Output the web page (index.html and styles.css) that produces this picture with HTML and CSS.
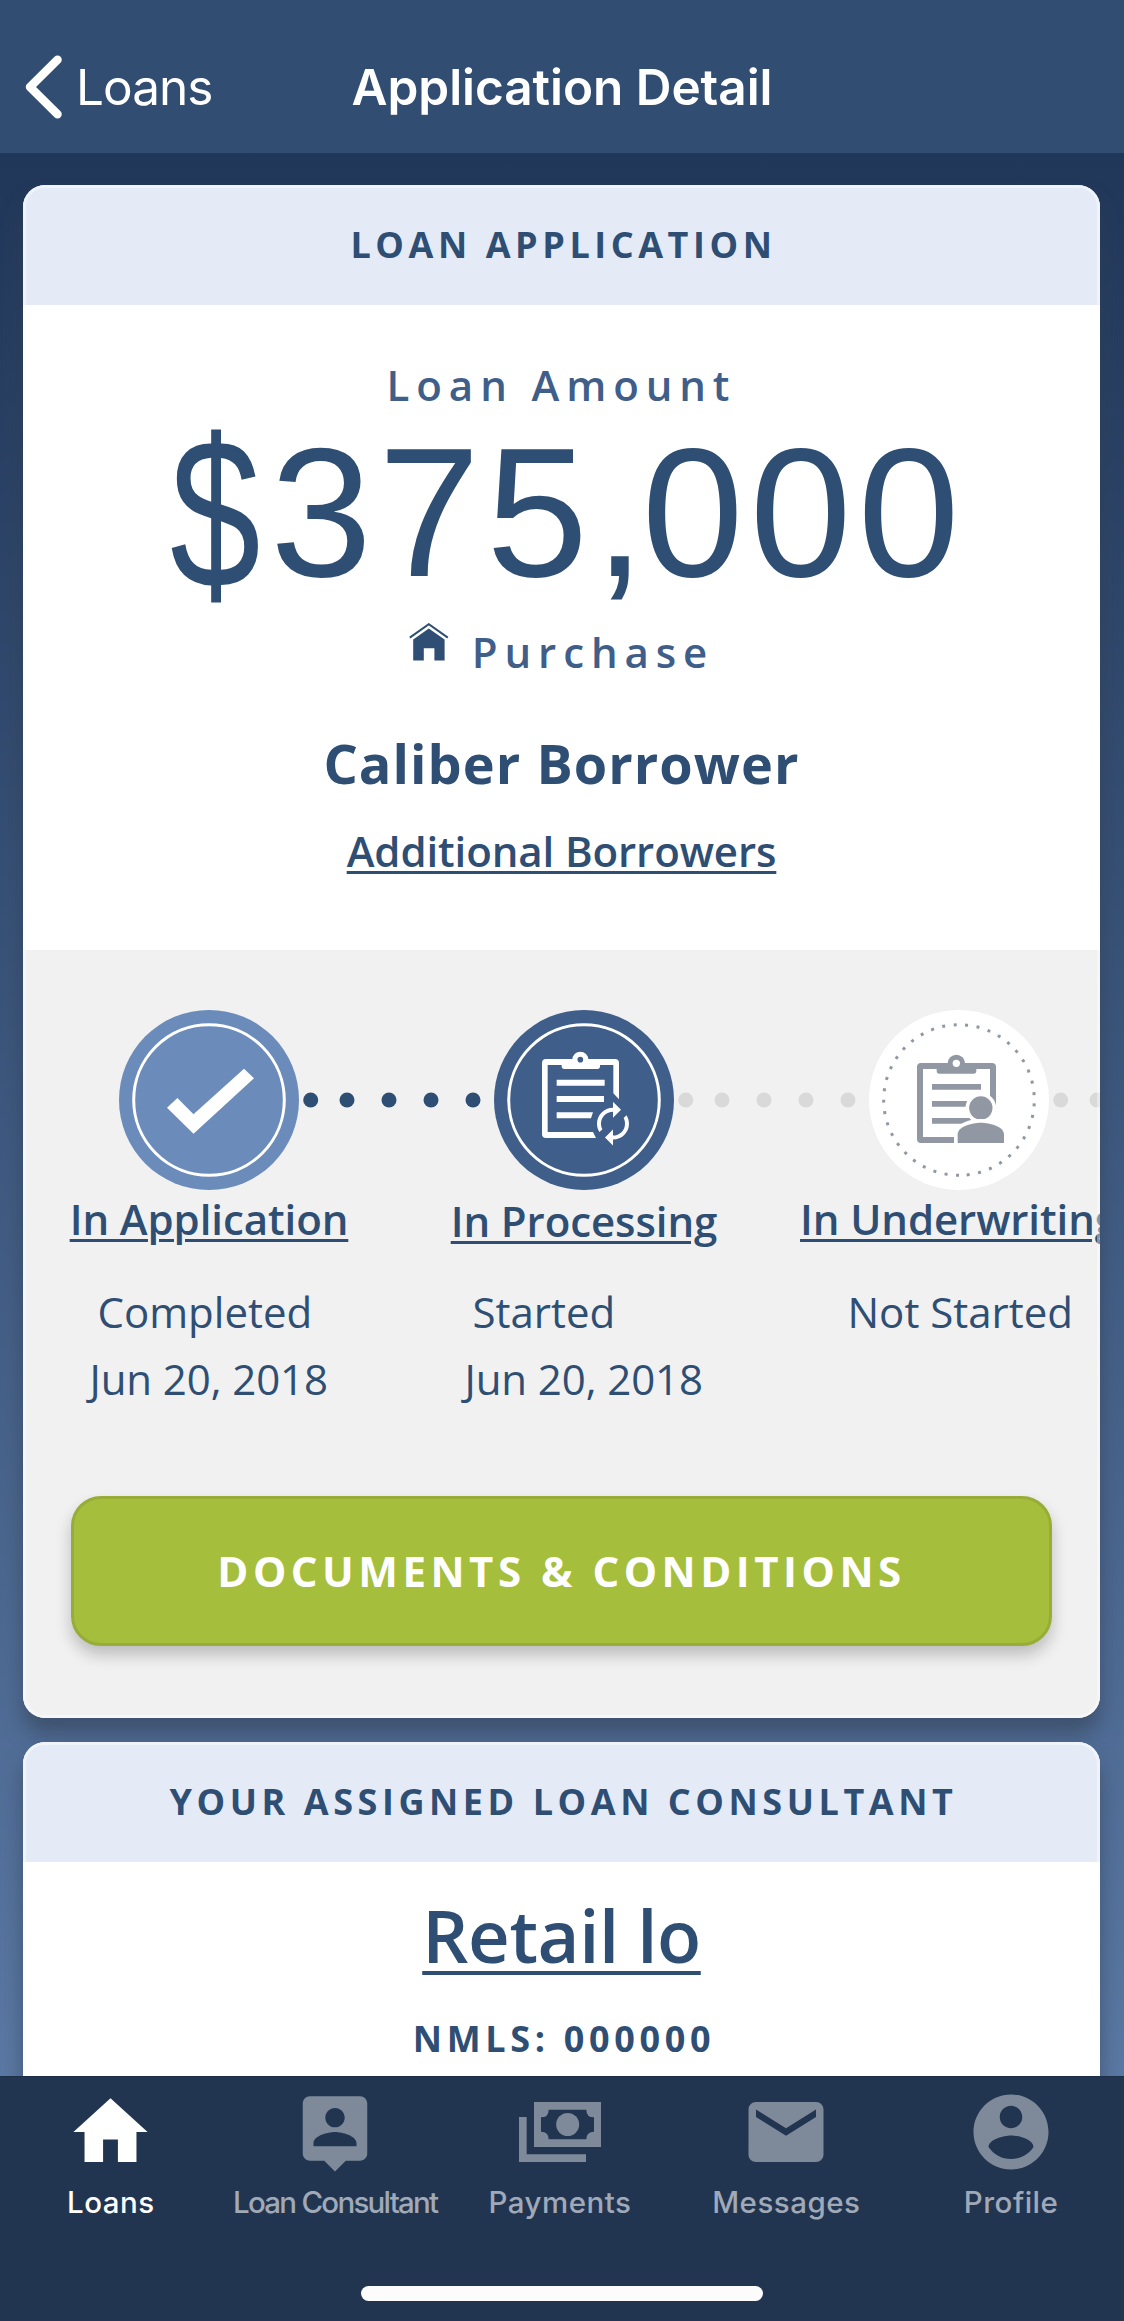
FILE: index.html
```
<!DOCTYPE html>
<html lang="en">
<head>
<meta charset="utf-8">
<title>Application Detail</title>
<link rel="stylesheet" href="styles.css">
</head>
<body>
<header class="navbar">
  <a class="back">
    <svg class="back-icon" width="42" height="70" viewBox="0 0 42 70"><path d="M36.500 7.800L9 35l27.500 27.200" fill="none" stroke="#fff" stroke-width="8.500" stroke-linecap="round" stroke-linejoin="round"/></svg>
    <span class="back-label">Loans</span>
  </a>
  <h1 class="title">Application Detail</h1>
</header>

<main class="content">
  <section class="card">
    <h2 class="card-head">LOAN APPLICATION</h2>
    <div class="summary">
      <p class="caption">Loan Amount</p>
      <p class="amount"><span class="currency">$</span>375<span class="comma">,</span>000</p>
      <div class="purpose">
        <svg class="house" width="40" height="38" viewBox="0 0 40 38" fill="#2f4e73"><path d="M.8 14.600L19.800 1.200l19 13.400" fill="none" stroke="#2f4e73" stroke-width="2"/><path d="M19.800 5.500L35.600 16.500v21H25.400V25.200H14.800v12.300H4.200v-21z"/></svg>
        <span class="caption">Purchase</span>
      </div>
      <p class="borrower">Caliber Borrower</p>
      <a class="link">Additional Borrowers</a>
    </div>

    <div class="progress">
      <div class="track">
        <svg class="stage" viewBox="0 0 180 180">
          <circle cx="90" cy="90" r="90" fill="#6b8cba"/>
          <circle cx="90" cy="90" r="75.300" fill="none" stroke="#fff" stroke-width="3"/>
          <path d="M48 97.700L58.400 88l16.100 16.300L125 58.700l10 9.600-60.500 55.400z" fill="#fff"/>
        </svg>
        <svg class="dots" viewBox="0 0 195 16" fill="#2f4e73"><circle cx="11.700" cy="8" r="7.500"/><circle cx="48" cy="8" r="7.500"/><circle cx="90" cy="8" r="7.500"/><circle cx="132" cy="8" r="7.500"/><circle cx="174" cy="8" r="7.500"/></svg>
        <svg class="stage" viewBox="0 0 180 180">
          <circle cx="90" cy="90" r="90" fill="#3f5e89"/>
          <circle cx="90" cy="90" r="75.300" fill="none" stroke="#fff" stroke-width="3"/>
          <g transform="translate(26 30) scale(.33333)" fill="#fff">
            <path d="M78 57H285q12 0 12 12V178L280 160V75H83V276H219L228 294H78q-12 0-12-12V69q0-12 12-12z"/>
            <path d="M125 66H240V79q0 8-8 8H133q-8 0-8-8z"/>
            <circle cx="181" cy="59" r="24"/><circle cx="181" cy="59" r="8.500" fill="#3f5e89"/>
            <path d="M110 119H254V137H110zM110 168H252V186H110zM110 217H219L213 235H110z"/>
            <path transform="translate(279 251) scale(-6 5.950) translate(-12 -12)" d="M12 4V1L8 5l4 4V6c3.310 0 6 2.690 6 6 0 1.010-.250 1.970-.700 2.800l1.460 1.460C19.540 15.030 20 13.570 20 12c0-4.420-3.580-8-8-8zm0 14c-3.310 0-6-2.690-6-6 0-1.010.250-1.970.700-2.800L5.240 7.740C4.460 8.970 4 10.430 4 12c0 4.420 3.580 8 8 8v3l4-4-4-4v3z"/>
          </g>
        </svg>
        <svg class="dots" viewBox="0 0 195 16" fill="#d9d9d9"><circle cx="11.700" cy="8" r="7.500"/><circle cx="48" cy="8" r="7.500"/><circle cx="90" cy="8" r="7.500"/><circle cx="132" cy="8" r="7.500"/><circle cx="174" cy="8" r="7.500"/></svg>
        <svg class="stage" viewBox="0 0 180 180">
          <circle cx="90" cy="90" r="90" fill="#fff"/>
          <circle cx="90" cy="90" r="75.300" transform="rotate(90 90 90)" fill="none" stroke="#9198a3" stroke-width="3" stroke-dasharray="3 8.540"/>
          <g transform="translate(21 30) scale(.33333)" fill="#9198a3">
            <path d="M93 69H306q12 0 12 12V200H300V87H99V291H192V309H93q-12 0-12-12V81q0-12 12-12z"/>
            <path d="M140 80H259V93q0 8-8 8H148q-8 0-8-8z"/>
            <circle cx="199" cy="70" r="26"/><circle cx="199" cy="70" r="11" fill="#fff"/>
            <path d="M126 132H273V149H126zM126 183H250V200H126zM126 234H250V251H126z"/>
            <g stroke="#fff" stroke-width="22" paint-order="stroke">
              <circle cx="272.500" cy="204" r="35"/>
              <path d="M203 309V283C203 260 245 248 272.500 248S342 260 342 283V309z"/>
            </g>
          </g>
        </svg>
        <svg class="dots" viewBox="0 0 195 16" fill="#d9d9d9"><circle cx="11.700" cy="8" r="7.500"/><circle cx="48" cy="8" r="7.500"/></svg>
      </div>
      <div class="stages">
        <div class="col"><a class="label">In Application</a><p class="state">Completed</p><p class="date">Jun 20, 2018</p></div>
        <div class="col"><a class="label current">In Processing</a><p class="state">Started</p><p class="date">Jun 20, 2018</p></div>
        <div class="col"><a class="label">In Underwriting</a><p class="state">Not Started</p></div>
      </div>
      <button class="action">DOCUMENTS &amp; CONDITIONS</button>
    </div>
  </section>

  <section class="card consultant">
    <h2 class="card-head">YOUR ASSIGNED LOAN CONSULTANT</h2>
    <a class="name">Retail lo</a>
    <p class="nmls">NMLS: 000000</p>
  </section>
</main>

<footer class="tabbar">
  <nav class="tabs">
    <a class="tab active">
      <span class="tab-icon"><svg width="89" height="90" viewBox="0 0 24 24" preserveAspectRatio="none"><path d="M10 20v-6h4v6h5v-8h3L12 3 2 12h3v8z"/></svg></span>
      <span class="tab-label">Loans</span>
    </a>
    <a class="tab long">
      <span class="tab-icon"><svg width="86" height="86" viewBox="0 0 24 24"><path d="M19 2H5c-1.110 0-2 .9-2 2v14c0 1.100.890 2 2 2h4l3 3 3-3h4c1.100 0 2-.9 2-2V4c0-1.100-.9-2-2-2zm-7 3.300c1.490 0 2.700 1.210 2.700 2.700 0 1.490-1.210 2.700-2.700 2.700-1.490 0-2.700-1.210-2.700-2.700 0-1.490 1.210-2.700 2.700-2.700zM18 16H6v-.9c0-2 4-3.100 6-3.100s6 1.100 6 3.100v.9z"/></svg></span>
      <span class="tab-label">Loan Consultant</span>
    </a>
    <a class="tab payments">
      <span class="tab-icon"><svg width="82" height="60" viewBox="0 0 246 180"><path fill-rule="evenodd" d="M45 0H246V135H45zM89 23Q89 46 66 46V89Q89 89 89 112H202Q202 89 225 89V46Q202 46 202 23z"/><circle cx="146" cy="67.500" r="34.500"/><path d="M0 45H23V157H201V180H0z"/></svg></span>
      <span class="tab-label">Payments</span>
    </a>
    <a class="tab">
      <span class="tab-icon"><svg width="90" height="90" viewBox="0 0 24 24"><path d="M20 4H4c-1.100 0-1.990.9-1.990 2L2 18c0 1.100.9 2 2 2h16c1.100 0 2-.9 2-2V6c0-1.100-.9-2-2-2zm0 4l-8 5-8-5V6l8 5 8-5v2z"/></svg></span>
      <span class="tab-label">Messages</span>
    </a>
    <a class="tab">
      <span class="tab-icon"><svg width="90" height="90" viewBox="0 0 24 24"><path d="M12 2C6.480 2 2 6.480 2 12s4.480 10 10 10 10-4.480 10-10S17.520 2 12 2zm0 3c1.660 0 3 1.340 3 3s-1.340 3-3 3-3-1.340-3-3 1.340-3 3-3zm0 14.200c-2.500 0-4.710-1.280-6-3.220.030-1.990 4-3.080 6-3.080 1.990 0 5.970 1.090 6 3.080-1.290 1.940-3.500 3.220-6 3.220z"/></svg></span>
      <span class="tab-label">Profile</span>
    </a>
  </nav>
  <div class="home-indicator"></div>
</footer>
</body>
</html>
```
FILE: styles.css
```
* { box-sizing: border-box; margin: 0; padding: 0; }

body {
  width: 1124px;
  height: 2321px;
  display: flex;
  flex-direction: column;
  overflow: hidden;
  font-family: "Open Sans", "Noto Sans", sans-serif;
  color: #2f4e73;
}

svg { display: block; flex: none; }

/* Navigation bar */
.navbar {
  flex: none;
  height: 153px;
  padding: 21px 21px 0;
  display: grid;
  grid-template-columns: 1fr auto 1fr;
  align-items: center;
  background: #314e72;
  color: #fff;
  font-family: Inter, sans-serif;
  font-size: 49.5px;
}
.back { display: flex; align-items: center; gap: 13px; }
.back-label { letter-spacing: -1px; }
.title { font-size: 49.5px; font-weight: 600; letter-spacing: -.05px; }

/* Scrolling area */
.content {
  flex: 1;
  min-height: 0;
  overflow: hidden;
  padding: 32px 24px 0 23px;
  display: flex;
  flex-direction: column;
  gap: 24px;
  background: linear-gradient(#213759, #5a78a3);
}

.card {
  flex: none;
  position: relative;
  border-radius: 22px;
  overflow: hidden;
  background: #fff;
  box-shadow: 0 16px 20px rgba(50, 64, 82, .58);
}
.card::after {
  content: "";
  position: absolute;
  inset: 0;
  border: 3px solid rgba(255, 255, 255, .4);
  border-radius: 22px;
  pointer-events: none;
}
.card-head {
  height: 120px;
  padding: 1px 0 0 4px;
  background: #e4ebf7;
  text-align: center;
  font-size: 36px;
  font-weight: 700;
  line-height: 118px;
  letter-spacing: 4.55px;
}

.summary {
  height: 645px;
  padding-top: 55px;
  display: flex;
  flex-direction: column;
  align-items: center;
}
.caption {
  color: #3f5e89;
  font-size: 42px;
  font-weight: 600;
  line-height: 50px;
  letter-spacing: 6.9px;
}
.amount {
  margin-top: 38px;
  padding-left: 5px;
  font-family: "Liberation Sans", Arial, sans-serif;
  font-size: 183px;
  line-height: 130px;
  letter-spacing: 6.2px;
}
.currency { display: inline-block; transform: translate(2px, 1px) scale(.89, 1.17); }
.comma { letter-spacing: -3.3px; }
.purpose { margin-top: 49px; display: flex; gap: 23px; }
.house { margin-top: -4px; }
.borrower {
  margin-top: 56px;
  font-size: 54px;
  font-weight: 700;
  line-height: 60px;
  letter-spacing: 1.05px;
}
.link {
  margin-top: 33px;
  font-size: 42px;
  font-weight: 600;
  line-height: 50px;
  letter-spacing: -.1px;
}
.link, .label, .name {
  text-decoration: underline;
  text-decoration-thickness: 3px;
  text-underline-offset: 4px;
}

/* Loan progress */
.progress { padding: 60px 48px 72px; background: #f1f1f1; }
.track { display: flex; align-items: center; margin: 0 -48px 0 48px; }
.stage { width: 180px; height: 180px; }
.dots { width: 195px; height: 16px; }
.stages {
  display: grid;
  grid-template-columns: repeat(3, 375px);
  height: 222px;
  margin: 0 -48px 0 -49.5px;
}
.label {
  display: block;
  height: 88px;
  padding-top: 4px;
  text-align: center;
  font-size: 42px;
  font-weight: 600;
  line-height: 50px;
  letter-spacing: -.08px;
}
.current { padding-top: 6px; }
.state, .date { font-size: 42px; line-height: 67px; }
.state { padding-left: 76px; }
.date { padding-left: 68px; letter-spacing: -.1px; }

.action {
  display: block;
  width: 100%;
  height: 150px;
  margin-top: 84px;
  padding-bottom: 2px;
  border: 3px solid #97ad38;
  border-radius: 30px;
  background: #a5be3c;
  box-shadow: 0 9px 16px rgba(0, 0, 0, .22);
  color: #fff;
  font-family: inherit;
  font-size: 42px;
  font-weight: 700;
  letter-spacing: 4.5px;
}

/* Assigned consultant */
.consultant { height: 480px; text-align: center; }
.name {
  display: block;
  margin-top: 28px;
  font-size: 72.4px;
  font-weight: 600;
  line-height: 90px;
  letter-spacing: -.4px;
  text-decoration-thickness: 4px;
  text-underline-offset: 8px;
}
.nmls {
  margin-top: 34px;
  padding-left: 5px;
  font-size: 36px;
  font-weight: 700;
  line-height: 50px;
  letter-spacing: 4.65px;
}

/* Tab bar */
.tabbar {
  flex: none;
  height: 245px;
  padding: 10px 0 20px;
  display: flex;
  flex-direction: column;
  justify-content: space-between;
  align-items: center;
  border-top: 1px solid #1d2f48;
  background: #223550;
}
.tabs { width: 100%; display: grid; grid-template-columns: repeat(5, 1fr); }
.tab {
  display: flex;
  flex-direction: column;
  align-items: center;
  gap: 7px;
  padding-right: 1px;
  color: #a0a9b8;
  fill: #7e8a9a;
}
.tab.active { color: #fff; fill: #fff; padding-right: 3px; }
.tab.long, .tab.payments { padding-right: 4px; }
.tab-icon { height: 90px; display: flex; align-items: center; }
.tab-label {
  font-family: Inter, sans-serif;
  font-size: 29.5px;
  font-weight: 500;
  line-height: 36px;
  letter-spacing: .5px;
  white-space: nowrap;
}
.long .tab-label { letter-spacing: -1.75px; }
.home-indicator {
  width: 402px;
  height: 15px;
  border-radius: 8px;
  background: #fcfcfc;
}
```
